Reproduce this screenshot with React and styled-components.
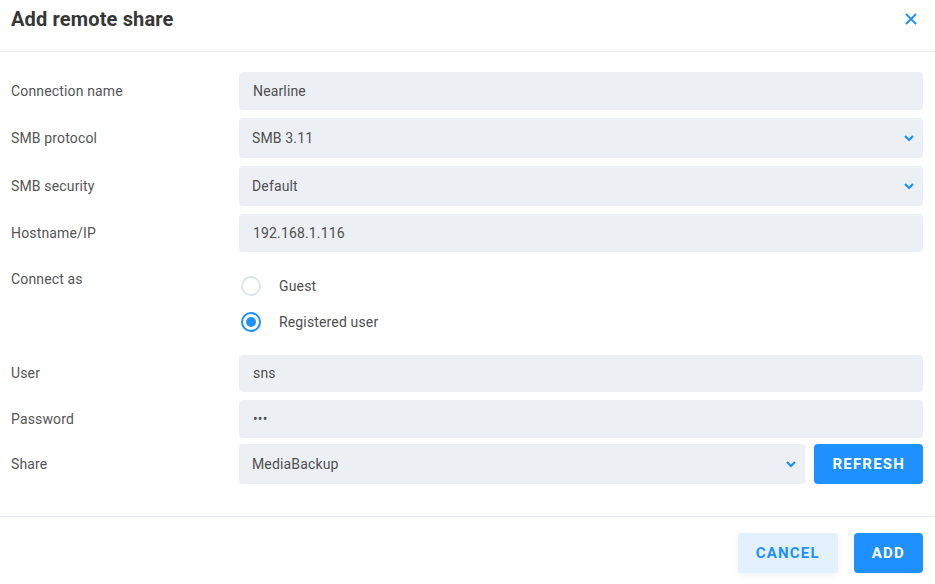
import React from 'react';
import styled, { createGlobalStyle } from 'styled-components';

const Global = createGlobalStyle`
  html, body {
    margin: 0;
    padding: 0;
    background: #fff;
    font-family: Roboto, "Liberation Sans", sans-serif;
  }
`;

const Dialog = styled.div`
  width: 935px;
  height: 584px;
  background: #fff;
  overflow: hidden;
`;

const Header = styled.div`
  height: 52px;
  box-sizing: border-box;
  padding: 7px 18px 0 11px;
  display: flex;
  justify-content: space-between;
  align-items: flex-start;
  border-bottom: 1px solid #e8eaed;
`;

const Title = styled.h1`
  margin: 0;
  font-size: 20px;
  line-height: 24px;
  font-weight: 700;
  letter-spacing: 0.15px;
  color: #363636;
`;

const CloseButton = styled.button`
  border: 0;
  background: none;
  padding: 0;
  margin-top: 6px;
  width: 12px;
  height: 12px;
  cursor: pointer;
  display: flex;
`;

const Body = styled.div`
  padding: 20px 12px 32px 11px;
  display: flex;
  flex-direction: column;
`;

const Row = styled.div`
  display: grid;
  grid-template-columns: 228px 1fr;
  align-items: ${p => (p.$top ? 'start' : 'center')};
  margin-top: ${p => p.$mt ?? 8}px;
  &:first-child {
    margin-top: 0;
  }
`;

const Label = styled.label`
  font-size: 14px;
  letter-spacing: 0.15px;
  color: #555;
  line-height: 38px;
`;

const Input = styled.input`
  box-sizing: border-box;
  width: 100%;
  height: ${p => p.$h ?? 38}px;
  border: 0;
  border-radius: 4px;
  background: #ecf0f4;
  padding: 0 14px;
  font-family: inherit;
  font-size: 14px;
  letter-spacing: 0.15px;
  color: #4f4f4f;
  outline: none;
`;

const Select = styled.div`
  box-sizing: border-box;
  flex: 1;
  height: 40px;
  border-radius: 4px;
  background: #ecf0f4;
  padding: 0 8px 0 13px;
  display: flex;
  align-items: center;
  justify-content: space-between;
  font-size: 14px;
  letter-spacing: 0.15px;
  color: #4f4f4f;
`;

const Inline = styled.div`
  display: flex;
  gap: 9px;
`;

const RadioGroup = styled.div`
  display: flex;
  flex-direction: column;
  padding: 8px 0 6px;
`;

const RadioRow = styled.label`
  height: 36px;
  display: flex;
  align-items: center;
  padding-left: 2px;
  font-size: 14px;
  letter-spacing: 0.15px;
  color: #4f4f4f;
  cursor: pointer;
`;

const RadioCircle = styled.span`
  box-sizing: border-box;
  width: 20px;
  height: 20px;
  border-radius: 50%;
  border: 2px solid ${p => (p.$checked ? '#1e90ff' : '#dce5ee')};
  margin-right: 18px;
  display: flex;
  align-items: center;
  justify-content: center;
  &::after {
    content: '';
    width: 10px;
    height: 10px;
    border-radius: 50%;
    background: ${p => (p.$checked ? '#1e90ff' : 'transparent')};
  }
`;

const Button = styled.button`
  height: 40px;
  border: 0;
  border-radius: 4px;
  padding: 0 18px;
  font-family: inherit;
  font-size: 15px;
  font-weight: 700;
  letter-spacing: 1.2px;
  text-transform: uppercase;
  cursor: pointer;
  background: ${p => (p.$light ? '#e3f0fe' : '#1e90ff')};
  color: ${p => (p.$light ? '#1e90ff' : '#fff')};
  box-shadow: ${p => (p.$light ? '0 2px 6px rgba(30, 80, 140, 0.08)' : 'none')};
`;

const Footer = styled.div`
  border-top: 1px solid #e4ecf4;
  padding: 16px 12px 16px;
  display: flex;
  justify-content: flex-end;
  gap: 16px;
`;

const Chevron = () => (
  <svg width="12" height="8" viewBox="0 0 12 8">
    <path d="M2 2l4 4 4-4" fill="none" stroke="#1e90ff" strokeWidth="2.2" />
  </svg>
);

const CloseIcon = () => (
  <svg width="12" height="12" viewBox="0 0 12 12">
    <path d="M1 1l10 10M11 1L1 11" stroke="#1e90ff" strokeWidth="1.9" />
  </svg>
);

export default function App() {
  return (
    <Dialog>
      <Global />
      <Header>
        <Title>Add remote share</Title>
        <CloseButton aria-label="Close">
          <CloseIcon />
        </CloseButton>
      </Header>
      <Body>
        <Row>
          <Label>Connection name</Label>
          <Input defaultValue="Nearline" />
        </Row>
        <Row>
          <Label>SMB protocol</Label>
          <Select>
            <span>SMB 3.11</span>
            <Chevron />
          </Select>
        </Row>
        <Row>
          <Label>SMB security</Label>
          <Select>
            <span>Default</span>
            <Chevron />
          </Select>
        </Row>
        <Row>
          <Label>Hostname/IP</Label>
          <Input defaultValue="192.168.1.116" />
        </Row>
        <Row $top>
          <Label>Connect as</Label>
          <RadioGroup>
            <RadioRow>
              <RadioCircle />
              Guest
            </RadioRow>
            <RadioRow>
              <RadioCircle $checked />
              Registered user
            </RadioRow>
          </RadioGroup>
        </Row>
        <Row>
          <Label>User</Label>
          <Input defaultValue="sns" $h={37} />
        </Row>
        <Row $mt={8}>
          <Label>Password</Label>
          <Input type="password" defaultValue="abc" />
        </Row>
        <Row $mt={6}>
          <Label>Share</Label>
          <Inline>
            <Select>
              <span>MediaBackup</span>
              <Chevron />
            </Select>
            <Button>Refresh</Button>
          </Inline>
        </Row>
      </Body>
      <Footer>
        <Button $light>Cancel</Button>
        <Button>Add</Button>
      </Footer>
    </Dialog>
  );
}
